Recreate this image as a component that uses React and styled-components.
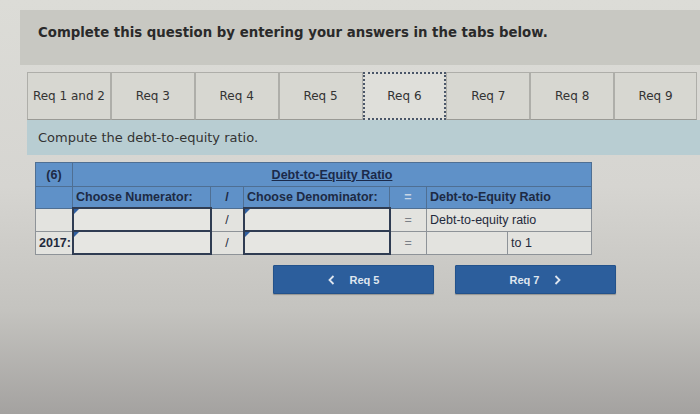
import React from 'react';
import styled, { createGlobalStyle } from 'styled-components';

const GlobalStyle = createGlobalStyle`
  html, body {
    margin: 0;
    padding: 0;
  }
  body {
    width: 700px;
    height: 414px;
    overflow: hidden;
    background: linear-gradient(to bottom, #dcdcd7 0%, #d6d5d1 45%, #c4c3bf 75%, #a4a2a0 100%);
    font-family: "DejaVu Sans", Verdana, sans-serif;
  }
`;

const tabs = ['Req 1 and 2', 'Req 3', 'Req 4', 'Req 5', 'Req 6', 'Req 7', 'Req 8', 'Req 9'];

const Page = styled.div`
  padding-top: 10px;
`;

const Header = styled.div`
  margin-left: 20px;
  height: 55px;
  box-sizing: border-box;
  padding: 15px 0 0 18px;
  background: #c8c8c2;
  font-size: 13.3px;
  font-weight: bold;
  color: #2a2a2a;
`;

const TabBar = styled.div`
  display: flex;
  margin: 7px 3px 0 27px;
  height: 48px;
`;

const Tab = styled.div`
  width: ${p => (p.$last ? 83 : 84)}px;
  box-sizing: border-box;
  display: flex;
  align-items: center;
  justify-content: center;
  font-size: 12px;
  color: #333;
  background: ${p => (p.$active ? '#dfdfda' : '#d7d7d1')};
  border: ${p => (p.$active ? '2px dotted #4a5668' : '1px solid #aeaea9')};
  border-bottom: ${p => (p.$active ? '2px dotted #4a5668' : '1px solid #9a9a95')};
`;

const Instruction = styled.div`
  margin-left: 27px;
  height: 35px;
  box-sizing: border-box;
  padding-left: 11px;
  display: flex;
  align-items: center;
  background: #b8cdd2;
  font-size: 13px;
  color: #333;
`;

const TableWrap = styled.div`
  margin: 7px 0 0 35px;
`;

const Grid = styled.table`
  border-collapse: collapse;
  table-layout: fixed;
  width: 556px;
  font-family: "Liberation Sans", Arial, sans-serif;
  font-size: 12.5px;
  color: #1f2a3c;
  border: 1px solid #7d8792;
`;

const HeadCell = styled.td`
  background: #5f91c8;
  height: ${p => p.$h || 20}px;
  padding: 0 3px;
  font-weight: bold;
  text-align: ${p => p.$align || 'left'};
  color: ${p => p.$light ? '#c8d6e6' : '#1d2a44'};
  border: 1px solid #4f6f93;
  white-space: nowrap;
`;

const Title = styled.span`
  text-decoration: underline;
  color: #1b2a4a;
`;

const Cell = styled.td`
  background: #e3e3df;
  height: 21px;
  padding: 0 3px;
  border: 1px solid #8e9398;
  text-align: ${p => p.$align || 'left'};
  font-weight: ${p => (p.$bold ? 'bold' : 'normal')};
  color: ${p => p.$muted ? '#7a7f86' : '#1f2a3c'};
  white-space: nowrap;
`;

const InputCell = styled.td`
  background: #e6e6e2;
  height: 21px;
  padding: 0;
  border: 2px solid #2f3c52;
  position: relative;

  &::before {
    content: '';
    position: absolute;
    top: 0;
    left: 0;
    border-top: 5px solid #2f5fa0;
    border-right: 5px solid transparent;
  }
`;

const Nav = styled.div`
  display: flex;
  gap: 21px;
  margin-top: 10px;
  padding-left: 273px;
`;

const NavButton = styled.button`
  width: 161px;
  height: 29px;
  display: flex;
  align-items: center;
  justify-content: center;
  gap: 15px;
  background: #2c5e9c;
  border: 1px solid #23528b;
  border-radius: 1px;
  box-shadow: 0 1px 1px rgba(0, 0, 0, 0.25);
  color: #dfe6ef;
  font-family: "Liberation Sans", Arial, sans-serif;
  font-size: 11px;
  font-weight: bold;
  padding: 0;
`;

const Chevron = ({ dir }) => (
  <svg width="7" height="10" viewBox="0 0 7 10">
    <path
      d={dir === 'left' ? 'M5.5 1 L1.5 5 L5.5 9' : 'M1.5 1 L5.5 5 L1.5 9'}
      fill="none"
      stroke="#dfe6ef"
      strokeWidth="1.8"
    />
  </svg>
);

const App = () => (
  <>
    <GlobalStyle />
    <Page>
      <Header>Complete this question by entering your answers in the tabs below.</Header>
      <TabBar>
        {tabs.map((t, i) => (
          <Tab key={t} $active={t === 'Req 6'} $last={i === tabs.length - 1}>{t}</Tab>
        ))}
      </TabBar>
      <Instruction>Compute the debt-to-equity ratio.</Instruction>
      <TableWrap>
        <Grid>
          <colgroup>
            <col style={{ width: 37 }} />
            <col style={{ width: 138 }} />
            <col style={{ width: 33 }} />
            <col style={{ width: 146 }} />
            <col style={{ width: 37 }} />
            <col style={{ width: 81 }} />
            <col style={{ width: 84 }} />
          </colgroup>
          <tbody>
            <tr>
              <HeadCell $h={23} $align="center">(6)</HeadCell>
              <HeadCell $h={23} $align="center" colSpan={6}><Title>Debt-to-Equity Ratio</Title></HeadCell>
            </tr>
            <tr>
              <HeadCell />
              <HeadCell>Choose Numerator:</HeadCell>
              <HeadCell $align="center">/</HeadCell>
              <HeadCell>Choose Denominator:</HeadCell>
              <HeadCell $align="center" $light>=</HeadCell>
              <HeadCell colSpan={2}>Debt-to-Equity Ratio</HeadCell>
            </tr>
            <tr>
              <Cell />
              <InputCell />
              <Cell $align="center">/</Cell>
              <InputCell />
              <Cell $align="center" $muted>=</Cell>
              <Cell colSpan={2}>Debt-to-equity ratio</Cell>
            </tr>
            <tr>
              <Cell $bold $align="right">2017:</Cell>
              <InputCell />
              <Cell $align="center">/</Cell>
              <InputCell />
              <Cell $align="center" $muted>=</Cell>
              <Cell />
              <Cell>to 1</Cell>
            </tr>
          </tbody>
        </Grid>
      </TableWrap>
      <Nav>
        <NavButton><Chevron dir="left" />Req 5</NavButton>
        <NavButton>Req 7<Chevron dir="right" /></NavButton>
      </Nav>
    </Page>
  </>
);

export default App;
